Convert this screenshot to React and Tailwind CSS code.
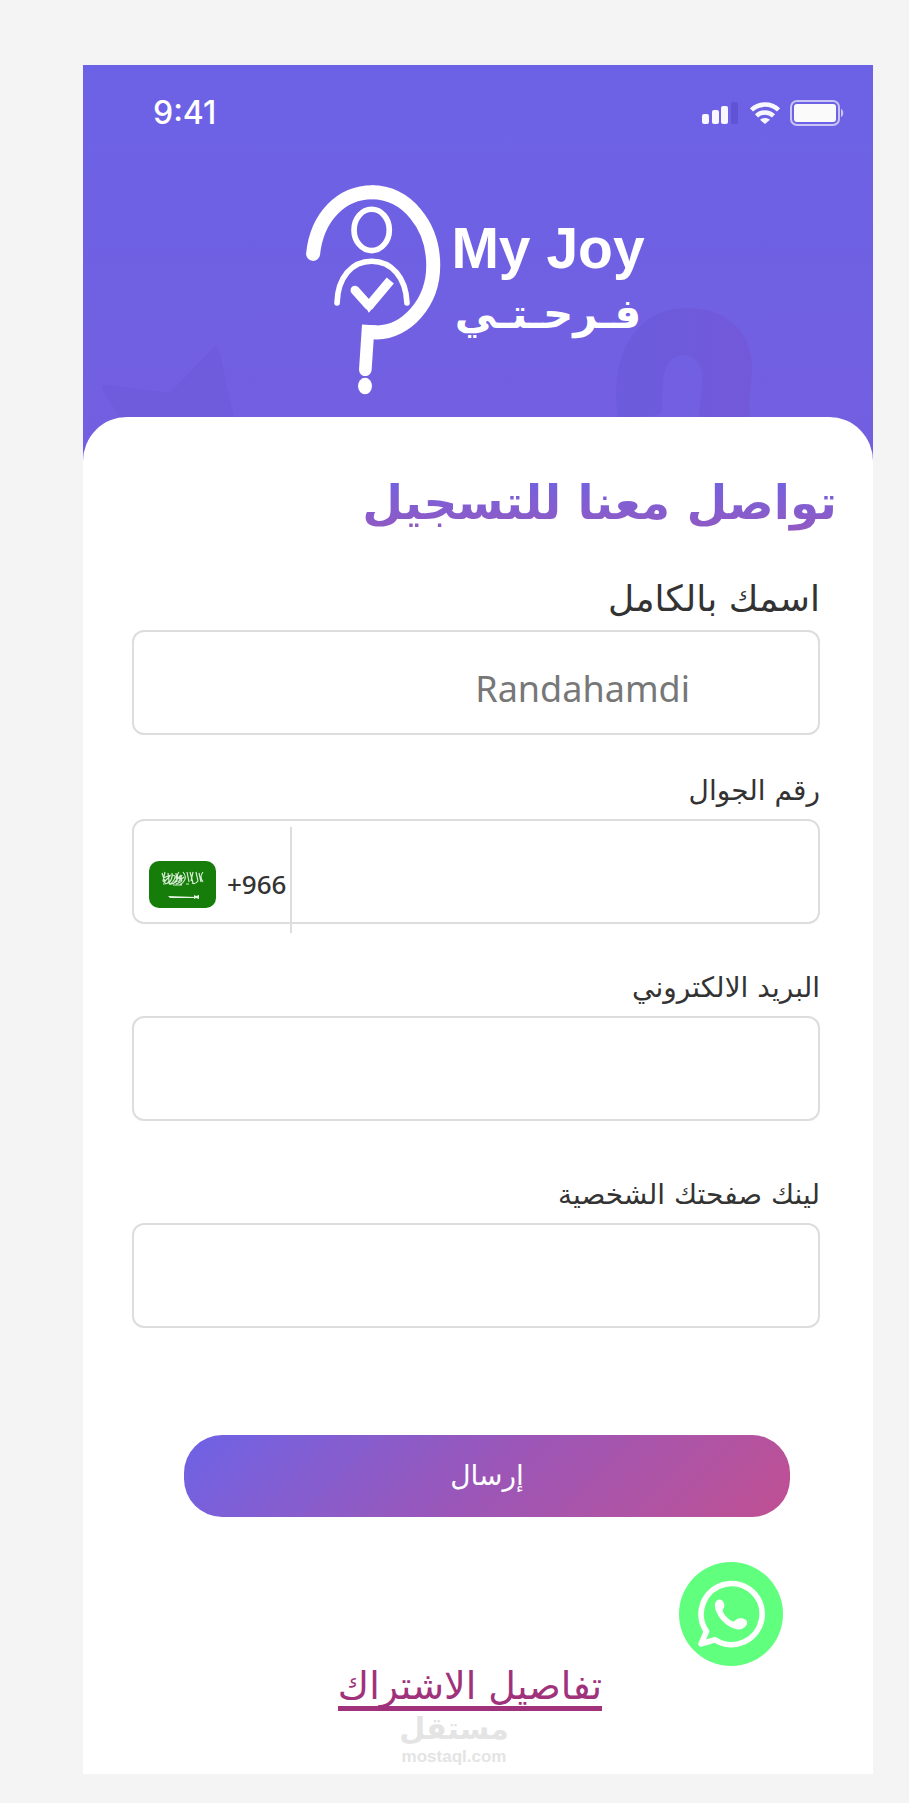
import React, { useState } from "react";

const StatusBar = () => (
  <div className="flex items-center justify-between pl-[70px] pr-[29px]">
    <p className="font-['Inter'] text-[32px] leading-8 font-medium">9:41</p>
    <div className="flex items-center">
      {/* Signal */}
      <svg width="36" height="22" viewBox="0 0 36 22" className="mr-3">
        <rect x="0" y="12" width="7" height="10" rx="2" fill="#f8f7ff" />
        <rect x="10" y="8" width="7" height="14" rx="2" fill="#f8f7ff" />
        <rect x="19" y="4" width="7" height="18" rx="2" fill="#f8f7ff" />
        <rect x="29" y="0" width="7" height="22" rx="2" fill="#6154d4" />
      </svg>
      {/* Wifi */}
      <svg width="30" height="22" viewBox="0 0 30 22" className="mr-[10px]">
        <g fill="none" stroke="#f8f7ff" strokeWidth="4.5">
          <path d="M1.5 8C9 .8 21 .8 28.500 8" />
          <path d="M6.500 13.800C11.300 9.400 18.700 9.400 23.500 13.800" />
        </g>
        <path d="M10 17.800C13 15.400 17 15.400 20 17.800L15 22Z" fill="#f8f7ff" />
      </svg>
      {/* Battery */}
      <svg width="54" height="26" viewBox="0 0 54 26">
        <rect x="1" y="1" width="48" height="24" rx="6" fill="none" stroke="#c9c4f6" strokeWidth="2" />
        <rect x="4" y="4" width="42" height="18" rx="3" fill="#fafafa" />
        <path d="M51 9C54 10 54 16 51 17Z" fill="#c9c4f6" />
      </svg>
    </div>
  </div>
);

const Logo = () => (
  <div className="flex items-start justify-center">
    <svg width="140" height="213" viewBox="40 40 420 640">
      <g fill="none" stroke="#fff">
        <path d="M70 253C82 140 156 68 248 68" strokeWidth="42" strokeLinecap="round" />
        <path d="M246 68C350 68 431 166 431 288C431 402 348 489 262 489L234 488" strokeWidth="42" />
        <ellipse cx="246" cy="181" rx="53" ry="62" strokeWidth="17" />
        <path d="M142 400C144 324 186 275 246 275C306 275 349 324 352 400" strokeWidth="17" strokeLinecap="round" />
        <path d="M237 410L302 333" strokeWidth="28" />
        <path d="M196 362L237 408" strokeWidth="27" strokeLinecap="round" />
      </g>
      <path d="M217 465L262 468L252 510L246 600C244 627 209 627 208 600Z" fill="#fff" />
      <path d="M223 402L237 430L254 411Z" fill="#fff" />
      <ellipse cx="226" cy="650" rx="21" ry="25" fill="#fff" />
    </svg>
    <div className="flex flex-col items-center pt-8 pl-2">
      <p className="font-['Liberation_Sans',sans-serif] text-[57px] leading-[66px] font-bold">
        My Joy
      </p>
      <p dir="rtl" className="mt-2 text-[42px] leading-[50px] font-bold">
        فـرحـتـي
      </p>
    </div>
  </div>
);

const WhatsAppIcon = () => (
  <svg width="104" height="104" viewBox="0 0 310 310">
    <circle cx="155" cy="155" r="155" fill="#60ff7e" />
    <path
      d="M82 207A91 91 0 1 1 108 232L66 244Z"
      fill="none"
      stroke="#fff"
      strokeWidth="17"
      strokeLinejoin="round"
    />
    <path
      d="M114 114C122 108 133 114 135 127C137 138 127 142 131 149C137 161 148 171 159 177C167 180 170 168 181 168C193 167 204 173 203 181C202 193 189 202 176 201C145 198 110 163 107 132C106 124 109 118 114 114Z"
      fill="#fff"
    />
  </svg>
);

const Field = ({ id, label, big, children }) => (
  <div className="flex flex-col">
    <label
      htmlFor={id}
      className={
        big
          ? "text-[36px] leading-[46px] mb-2 text-[#333333]"
          : "text-[28px] leading-8 mb-3 text-[#333333]"
      }
    >
      {label}
    </label>
    {children}
  </div>
);

const inputStyle =
  "h-[105px] w-full rounded-xl border-2 border-[#dddddd] bg-white outline-none text-[#777777]";

const App = () => {
  const [form, setForm] = useState({
    name: "Randahamdi",
    phone: "",
    email: "",
    link: "",
  });

  const handleChange = (e) => {
    setForm({ ...form, [e.target.id]: e.target.value });
  };

  return (
    <div className="min-h-screen bg-[#f4f4f4] pt-[65px] pr-9 pb-[29px] pl-[83px] font-['DejaVu_Sans',sans-serif]">
      <div className="bg-white">
        {/* Header */}
        <header className="relative bg-linear-to-b from-[#6c62e6] to-[#735fe0] pt-8 pb-[65px] text-white">
          <svg width="132" height="73" viewBox="0 0 132 73" className="absolute bottom-[43px] left-[19px]">
            <path d="M0 43Q1 39 5 40L68 48L112 2Q116 -1 117 5L132 73H19L1 47Z" fill="#6e5cdc" />
          </svg>
          <svg width="138" height="110" viewBox="0 0 138 110" className="absolute right-[120px] bottom-[43px]">
            <defs>
              <linearGradient id="cane" x1="0" x2="1">
                <stop offset="0.3" stopColor="#6c5bdb" />
                <stop offset="1" stopColor="#7359da" />
              </linearGradient>
            </defs>
            <path
              d="M3 110C-6 50 18 0 72 0C118 0 138 30 137 62C136 82 133 95 135 110H84C84 90 90 76 86 62C82 44 58 40 50 62C46 76 48 90 47 103Q46 107 36 108Z"
              fill="url(#cane)"
            />
          </svg>
          <StatusBar />
          <div className="relative mt-[54px] pr-2">
            <Logo />
          </div>
        </header>

        <main dir="rtl" className="relative -mt-11 rounded-t-[44px] bg-white pt-[53px] pb-[7px]">
          <h1 className="bg-linear-to-b from-[#6c62e6] to-[#9458be] bg-clip-text pr-9 text-[47px] leading-[66px] font-bold text-transparent">
            تواصل معنا للتسجيل
          </h1>

          <form className="pt-10 pr-[53px] pl-[49px]" onSubmit={(e) => e.preventDefault()}>
            <Field id="name" label="اسمك بالكامل" big>
              <input
                id="name"
                dir="ltr"
                value={form.name}
                onChange={handleChange}
                className={`${inputStyle} pt-3 pr-32 text-right font-['Noto_Sans',sans-serif] text-[36px]`}
              />
            </Field>

            <div className="mt-10">
              <Field id="phone" label="رقم الجوال">
                <div dir="ltr" className="flex h-[105px] rounded-xl border-2 border-[#dddddd]">
                  <div className="mt-[6px] flex h-[106px] w-[158px] shrink-0 items-center border-r-2 border-[#dddddd] pt-2 pl-[15px]">
                    <svg width="67" height="47" viewBox="0 0 67 47">
                      <rect width="67" height="47" rx="10" fill="#167d0b" />
                      <g fill="none" stroke="#d5ecd2" strokeWidth="1.2">
                        <path d="M13 12l3 9M16 11l-2 9q4 5 6 0l-1-8M20 22q4-5 3-10M23 14q5 0 2 5t-5 3M27 12l1 8q-5 4-8 3M30 11q-4 5 1 7t-4 5M33 14l-3 6M34 11q4 5 1 9t-4 3M38 11l2 10M41 11l3 11M44 11l-2 9M47 11l2 9q-3 4-6 2M50 12l2 9M54 11q-4 5 0 10M14 23q6 0 8-4M24 24h9M37 23h3M14 17l8-3M15 21l6-6M25 22l7-8M29 21l6-5M26 17h7" />
                      </g>
                      <path d="M19 35L47 36V37L21 37ZM45 34l2 1 3-1v4l-3-1-2 1Z" fill="#e5f3e3" />
                    </svg>
                    <span className="ml-[11px] font-['Noto_Sans',sans-serif] text-[26px] font-medium text-[#333333]">
                      +966
                    </span>
                  </div>
                  <input
                    id="phone"
                    type="tel"
                    value={form.phone}
                    onChange={handleChange}
                    className="min-w-0 flex-1 bg-transparent px-4 text-2xl outline-none"
                  />
                </div>
              </Field>
            </div>

            <div className="mt-12">
              <Field id="email" label="البريد الالكتروني">
                <input
                  id="email"
                  type="email"
                  value={form.email}
                  onChange={handleChange}
                  className={`${inputStyle} px-4 text-2xl`}
                />
              </Field>
            </div>

            <div className="mt-[58px]">
              <Field id="link" label="لينك صفحتك الشخصية">
                <input
                  id="link"
                  type="url"
                  value={form.link}
                  onChange={handleChange}
                  className={`${inputStyle} px-4 text-2xl`}
                />
              </Field>
            </div>

            <div className="mt-[107px] pr-[30px] pl-[52px]">
              <button
                type="submit"
                className="h-[82px] w-full rounded-[38px] bg-linear-135 from-[#6c62e6] via-[#9b56b8] to-[#c04f92] text-[28px] text-white"
              >
                إرسال
              </button>
            </div>
          </form>

          <div className="mt-[45px] flex pr-[90px]">
            <a href="#whatsapp" aria-label="WhatsApp">
              <WhatsAppIcon />
            </a>
          </div>

          <div className="flex justify-center pr-4">
            <a
              href="#details"
              className="border-b-[5px] border-[#a0327c] text-[38px] leading-10 text-[#a0327c]"
            >
              تفاصيل الاشتراك
            </a>
          </div>

          {/* Watermark */}
          <div className="flex flex-col items-center pr-12 text-[#e4e4e4]">
            <p className="text-[30px] leading-9 font-bold">مستقل</p>
            <p className="font-['Liberation_Sans',sans-serif] text-[17px] leading-5 font-bold">
              mostaql.com
            </p>
          </div>
        </main>
      </div>
    </div>
  );
};

export default App;
